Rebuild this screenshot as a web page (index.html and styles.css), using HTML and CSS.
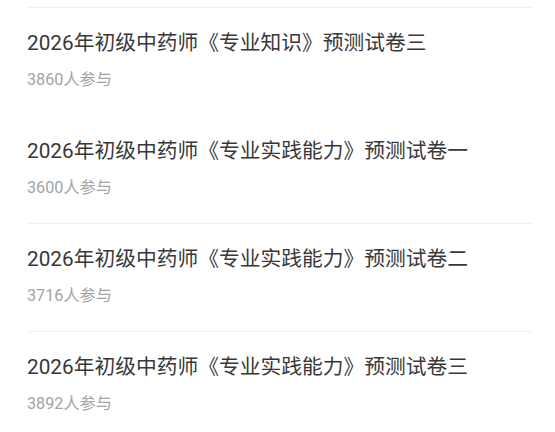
FILE: index.html
```html
<!DOCTYPE html>
<html lang="zh-CN">
<head>
<meta charset="utf-8">
<title>预测试卷</title>
<link rel="stylesheet" href="styles.css">
</head>
<body>
<ul class="paper-list">
  <li class="paper">
    <div class="paper-title">2026年初级中药师《专业知识》预测试卷三</div>
    <div class="paper-meta">3860人参与</div>
  </li>
  <li class="paper paper--plain">
    <div class="paper-title">2026年初级中药师《专业实践能力》预测试卷一</div>
    <div class="paper-meta">3600人参与</div>
  </li>
  <li class="paper">
    <div class="paper-title">2026年初级中药师《专业实践能力》预测试卷二</div>
    <div class="paper-meta">3716人参与</div>
  </li>
  <li class="paper">
    <div class="paper-title">2026年初级中药师《专业实践能力》预测试卷三</div>
    <div class="paper-meta">3892人参与</div>
  </li>
</ul>
</body>
</html>
```
FILE: styles.css
```css
html, body {
  margin: 0;
  padding: 0;
  background: #ffffff;
}
body {
  font-family: Roboto, "Noto Sans CJK SC", sans-serif;
}
.paper-list {
  list-style: none;
  margin: 0;
  padding: 7px 23px 0 27px;
}
.paper {
  border-top: 1px solid #f0f0f0;
  padding: 20px 0 24px;
}
.paper--plain {
  border-top-color: transparent;
}
.paper-title {
  font-size: 20.75px;
  line-height: 30px;
  color: #383838;
  white-space: nowrap;
}
.paper-meta {
  margin-top: 11px;
  font-size: 16.2px;
  line-height: 22px;
  color: #a3a3a3;
}
```
